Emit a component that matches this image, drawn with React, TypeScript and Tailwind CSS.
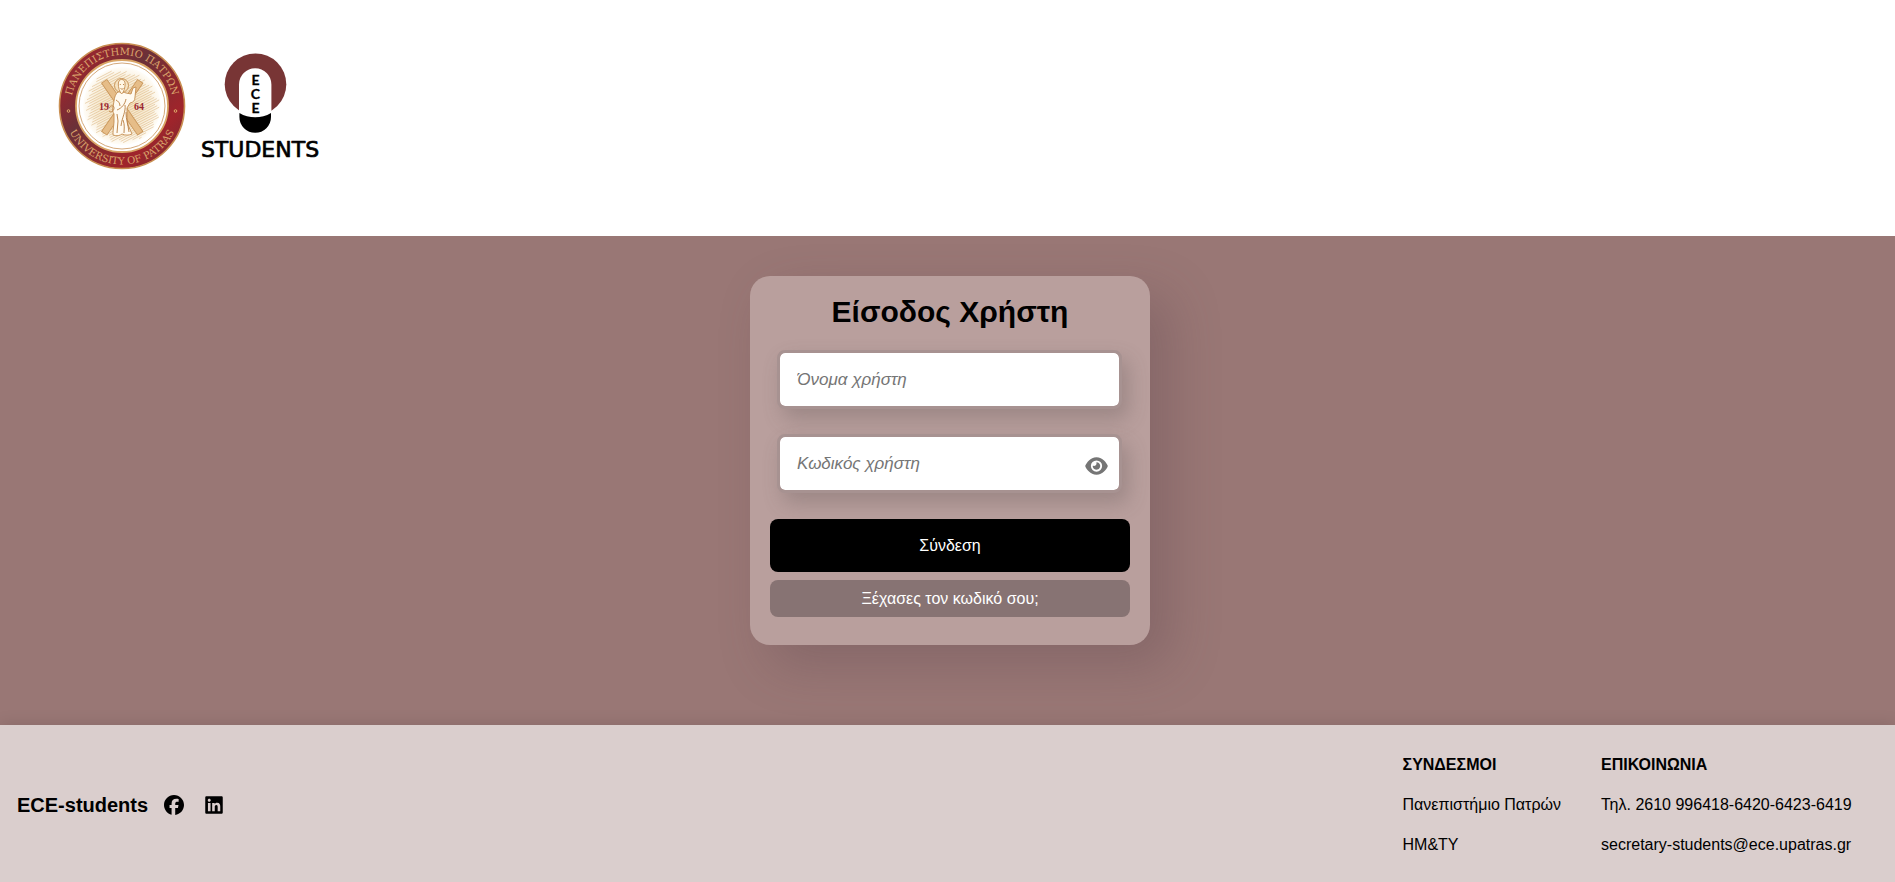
import { useState } from "react";
import { FaEye, FaFacebook, FaLinkedin } from "react-icons/fa6";

function UniversitySeal() {
  const hatch = Array.from({ length: 34 }, (_, i) => {
    const c = -36 + i * 2.2;
    const half = Math.sqrt(Math.max(0, 37 * 37 - c * c)) - ((i * 5) % 7);
    const cx = 64 + c * 0.5;
    const cy = 64 + c * 0.87;
    return (
      <line
        key={i}
        x1={cx - half * 0.87}
        y1={cy + half * 0.5}
        x2={cx + half * 0.9}
        y2={cy - half * 0.42}
      />
    );
  });
  return (
    <svg viewBox="0 0 128 128" className="h-32 w-32" role="img" aria-label="University of Patras">
      <defs>
        <linearGradient id="ring" x1="0" y1="0" x2="1" y2="1">
          <stop offset="0" stopColor="#a3262c" />
          <stop offset="0.22" stopColor="#8f2830" />
          <stop offset="0.4" stopColor="#6a3038" />
          <stop offset="0.58" stopColor="#8a2a2f" />
          <stop offset="0.75" stopColor="#a0242b" />
          <stop offset="1" stopColor="#6d2c33" />
        </linearGradient>
        <radialGradient id="glow">
          <stop offset="0" stopColor="#f3e0bd" />
          <stop offset="0.7" stopColor="#f8edd8" />
          <stop offset="1" stopColor="#fffdf8" />
        </radialGradient>
        <path id="arcTop" d="M13 64a51 51 0 0 1 102 0" />
        <path id="arcBottom" d="M5.500 64a58.500 58.500 0 0 0 117 0" />
      </defs>
      <circle cx="64" cy="64" r="62.500" fill="url(#ring)" stroke="#c98f52" strokeWidth="1.600" />
      <circle cx="64" cy="64" r="46" fill="#fff" stroke="#d9a566" strokeWidth="1.800" />
      <circle cx="64" cy="64" r="43" fill="none" stroke="#c9935a" strokeWidth="0.800" />
      <circle cx="64" cy="64" r="39" fill="url(#glow)" />
      <g stroke="#dcb67e" strokeWidth="0.900" opacity="0.6">{hatch}</g>
      <path d="M46 39 82.500 91.500M82.500 39 46 91.500" stroke="#c9965a" strokeWidth="7.400" />
      <path d="M46.500 39.700 82 90.800M82 39.700 46.500 90.800" stroke="#e6bd88" strokeWidth="5.600" />
      <circle cx="63.500" cy="43.500" r="7" fill="#f6e3c2" stroke="#c99558" strokeWidth="1" />
      <path
        d="M60 50c-2.500 2-3.500 5-4 9l-1 6c-1 3 0 5 1 7l0 8-1 10 0 3c4 1.500 7 .5 9-1 3 1.500 7 1.500 10 0l-4-9-1-8 0-9 3-5c3-.5 5-2 5-6l1-10-3 1-2 6-5-1c-2-1-5-1-8-1z"
        fill="#fffaf0"
        stroke="#c48f52"
        strokeWidth="0.900"
      />
      <path
        d="M60.300 42c0-3 1.400-4.500 3.400-4.500s3.400 1.500 3.400 4.500-1 8-3.400 10c-2.400-2-3.400-7-3.400-10z"
        fill="#fff6e4"
        stroke="#c48f52"
        strokeWidth="0.900"
      />
      <path
        d="M61.800 42.500h1M65 42.500h1M62.500 46.500c1 .8 2 .8 3 0M58 58c2 1 4 3 4 6M68 57c-1 5-4 9-9 11M67 63c1 7-3 12-4 21M68 70c0 8 2 12 3 20M65 78c2 5 1 9 1 13M59 72l1 7-1 12M51 66c2-3 5-3 5 0s-3 5-5 3"
        fill="none"
        stroke="#b87d3f"
        strokeWidth="0.900"
      />
      <g className="font-['DejaVu_Serif',serif]" fill="#dba56c">
        <text textAnchor="middle" fontSize="10">
          <textPath href="#arcTop" startOffset="50%">ΠΑΝΕΠΙΣΤΗΜΙΟ ΠΑΤΡΩΝ</textPath>
        </text>
        <text textAnchor="middle" fontSize="10">
          <textPath href="#arcBottom" startOffset="50%">UNIVERSITY OF PATRAS</textPath>
        </text>
      </g>
      <g fill="none" stroke="#dfa968">
        <circle cx="10.500" cy="69" r="1.300" />
        <circle cx="117.500" cy="69" r="1.300" />
      </g>
      <g className="font-['Liberation_Serif',serif] font-bold" fill="#9a2630" fontSize="10">
        <text x="41" y="68">19</text>
        <text x="76" y="68">64</text>
      </g>
    </svg>
  );
}

function EceLogo() {
  return (
    <svg viewBox="0 0 124 114" className="h-[114px] w-[124px]" role="img" aria-label="ECE Students">
      <circle cx="57.500" cy="34.200" r="30.800" fill="#783535" />
      <path d="M41 67V34.500a16.200 16.200 0 0 1 32.400 0V67z" fill="#fff" />
      <path d="M41.400 63a31 31 0 0 0 31.600 0V67a15.800 15.800 0 0 1-31.600 0z" fill="#000" />
      <g
        className="font-[Lato,sans-serif] font-bold"
        fontSize="14"
        textAnchor="middle"
        fill="#000"
        stroke="#000"
        strokeWidth="0.300"
      >
        <text x="57.500" y="34.500">E</text>
        <text x="57.500" y="49">C</text>
        <text x="57.500" y="63">E</text>
      </g>
      <text
        x="62"
        y="107"
        className="font-['DejaVu_Sans',sans-serif]"
        fontSize="22"
        textAnchor="middle"
        stroke="#000"
        strokeWidth="0.700"
        strokeLinejoin="round"
      >
        STUDENTS
      </text>
    </svg>
  );
}

const fieldClass =
  "h-[59px] w-full rounded-lg border-3 border-[#a79291] bg-white bg-clip-padding px-[17px] text-[17px] text-black shadow-[6px_10px_20px_rgba(90,80,78,0.3)] outline-none placeholder:text-[#757575] placeholder:italic";

export default function App() {
  const [visible, setVisible] = useState(false);
  return (
    <div className="flex min-h-screen flex-col bg-[#997775] font-['Liberation_Sans',Arial,sans-serif] text-base text-black">
      <header className="flex h-[236px] items-start gap-3 bg-white px-[58px] pt-[42px]">
        <a href="#university" aria-label="University of Patras">
          <UniversitySeal />
        </a>
        <a href="#home" aria-label="ECE Students" className="pt-2">
          <EceLogo />
        </a>
      </header>

      <main className="flex grow justify-center pt-10 pb-20 pl-[5px]">
        <form
          onSubmit={(e) => e.preventDefault()}
          className="flex w-[400px] flex-col self-start rounded-[20px] bg-[#b99f9d] px-5 pt-[18px] pb-7 shadow-[20px_20px_50px_rgba(80,58,72,0.27)]"
        >
          <h1 className="text-center text-3xl leading-9 font-bold">Είσοδος Χρήστη</h1>
          <div className="mt-5 flex flex-col gap-[25px] pr-2 pl-[7px]">
            <input type="text" aria-label="Όνομα χρήστη" placeholder="Όνομα χρήστη" className={fieldClass} />
            <div className="relative">
              <input
                type={visible ? "text" : "password"}
                aria-label="Κωδικός χρήστη"
                placeholder="Κωδικός χρήστη"
                className={fieldClass}
              />
              <button
                type="button"
                aria-label="Εμφάνιση κωδικού"
                onClick={() => setVisible(!visible)}
                className="absolute inset-y-0 right-[14px] flex items-center pt-1 text-[#757575]"
              >
                <FaEye className="h-5 w-[23px]" />
              </button>
            </div>
          </div>
          <button type="submit" className="mt-[26px] h-[53px] rounded-lg bg-black text-white">
            Σύνδεση
          </button>
          <button type="button" className="mt-2 h-[37px] rounded-lg bg-[#877373] text-white">
            Ξέχασες τον κωδικό σου;
          </button>
        </form>
      </main>

      <footer className="flex items-center justify-between bg-[#dacecd] pt-5 pr-[38px] pb-[17px] pl-[17px] shadow-[0_0_16px_rgba(0,0,0,0.12)]">
        <div className="flex items-center">
          <h2 className="text-xl font-bold">ECE-students</h2>
          <a href="#facebook" aria-label="Facebook" className="ml-4">
            <FaFacebook className="size-5" />
          </a>
          <a href="#linkedin" aria-label="LinkedIn" className="ml-5">
            <FaLinkedin className="size-5" />
          </a>
        </div>
        <div className="flex gap-10 leading-10">
          <nav aria-label="Σύνδεσμοι" className="flex flex-col">
            <h3 className="font-bold">ΣΥΝΔΕΣΜΟΙ</h3>
            <a href="#upatras">Πανεπιστήμιο Πατρών</a>
            <a href="#ece">ΗΜ&amp;ΤΥ</a>
          </nav>
          <address className="flex w-64 flex-col not-italic">
            <h3 className="font-bold">ΕΠΙΚΟΙΝΩΝΙΑ</h3>
            <span>Τηλ. 2610 996418-6420-6423-6419</span>
            <a href="mailto:secretary-students@ece.upatras.gr">secretary-students@ece.upatras.gr</a>
          </address>
        </div>
      </footer>
    </div>
  );
}
